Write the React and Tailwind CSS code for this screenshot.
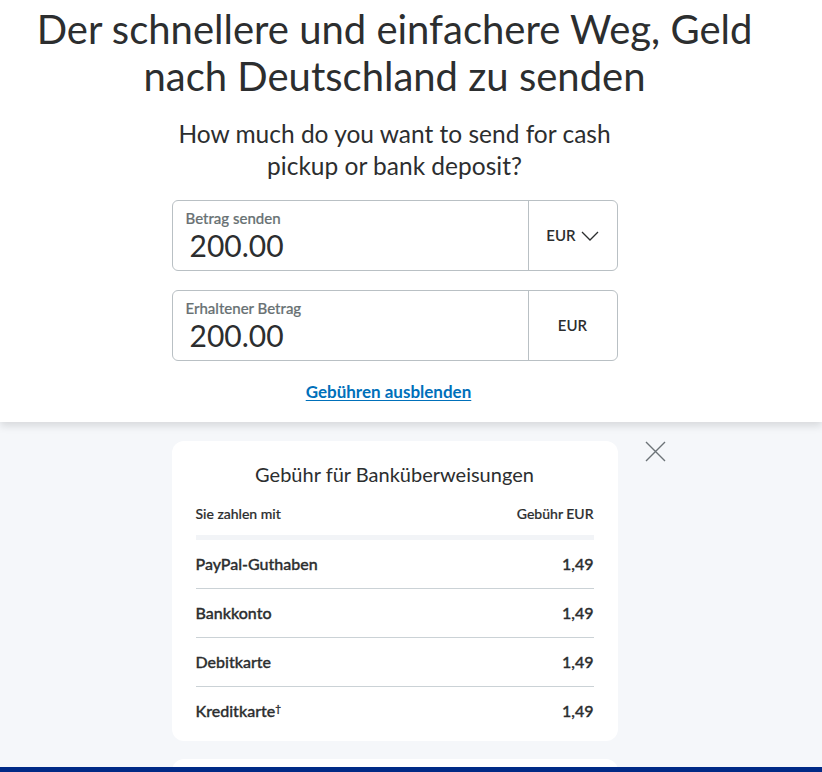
import React from 'react';

const rows = [
  { label: 'PayPal-Guthaben', fee: '1,49' },
  { label: 'Bankkonto', fee: '1,49' },
  { label: 'Debitkarte', fee: '1,49' },
  { label: 'Kreditkarte', fee: '1,49', mark: true },
];

const AmountField = ({ label, value, currency, dropdown }) => (
  <div className="flex h-[71px] w-[446px] rounded-md border border-[#b9c0c4] bg-white">
    <div className="flex flex-1 flex-col pl-[13px] pt-[8px]">
      <span className="text-[15px] font-medium leading-[18px] text-[#687173] [-webkit-text-stroke:0.2px_#687173]">{label}</span>
      <span className="ml-[4px] text-[30px] leading-[36px] text-[#2c2e2f]">{value}</span>
    </div>
    <div className="flex w-[89px] items-center justify-center border-l border-[#b9c0c4] text-[15px] font-semibold text-[#2c2e2f]">
      {currency}
      {dropdown && (
        <svg className="ml-[5px]" width="18" height="10" viewBox="0 0 18 10" fill="none">
          <path d="M1 1l8 8 8-8" stroke="#2c2e2f" strokeWidth="1.3" />
        </svg>
      )}
    </div>
  </div>
);

const App = () => {
  return (
    <div className="min-h-screen bg-[#f5f7fa]" style={{ fontFamily: 'Lato, "Open Sans", sans-serif' }}>
      {/* top white panel */}
      <div className="bg-white pb-[17px] shadow-[0_4px_8px_rgba(0,0,0,0.12)]">
        <div className="flex w-[789px] flex-col items-center">
          <h1 className="pt-[6px] text-center text-[40px] leading-[47px] text-[#2c2e2f]">
            Der schnellere und einfachere Weg, Geld
            <br />
            nach Deutschland zu senden
          </h1>
          <p className="mt-[18px] text-center text-[24.5px] leading-[32px] text-[#2c2e2f]">
            How much do you want to send for cash
            <br />
            pickup or bank deposit?
          </p>
          <div className="mt-[18px] flex flex-col gap-[19px]">
            <AmountField label="Betrag senden" value="200.00" currency="EUR" dropdown />
            <AmountField label="Erhaltener Betrag" value="200.00" currency="EUR" />
          </div>
          <a href="#" className="mt-[18px] pr-[12px] text-[17px] font-bold text-[#0070ba] underline underline-offset-2">
            Gebühren ausblenden
          </a>
        </div>
      </div>

      {/* fees */}
      <div className="relative w-[789px] pt-[19px]">
        <div className="mx-auto w-[446px] rounded-xl bg-white px-[24px] pb-[5px] pt-[19px]">
          <h2 className="text-center text-[20px] leading-[28px] text-[#2c2e2f]">Gebühr für Banküberweisungen</h2>
          <div className="mt-[15px] flex justify-between text-[14px] font-medium text-[#2c2e2f] [-webkit-text-stroke:0.2px_#2c2e2f]">
            <span>Sie zahlen mit</span>
            <span>Gebühr EUR</span>
          </div>
          <div className="mt-[11px] h-[5px] bg-[#f2f4f7]" />
          {rows.map((r, i) => (
            <div
              key={r.label}
              className={`flex h-[49px] items-center justify-between text-[16px] font-medium text-[#2c2e2f] [-webkit-text-stroke:0.35px_#2c2e2f] ${i < rows.length - 1 ? 'border-b border-[#cbd2d6]' : ''}`}
            >
              <span>
                {r.label}
                {r.mark && <sup className="text-[10px]">†</sup>}
              </span>
              <span>{r.fee}</span>
            </div>
          ))}
        </div>
        <button className="absolute left-[645px] top-[19px] p-0">
          <svg width="21" height="21" viewBox="0 0 21 21">
            <path d="M1 1l19 19M20 1L1 20" stroke="#6c7378" strokeWidth="1.4" />
          </svg>
        </button>
        <div className="mx-auto mt-[18px] h-[20px] w-[446px] rounded-t-xl bg-white" />
      </div>
      <div className="fixed bottom-0 left-0 h-[5px] w-full bg-[#002a86]" />
    </div>
  );
};

export default App;
